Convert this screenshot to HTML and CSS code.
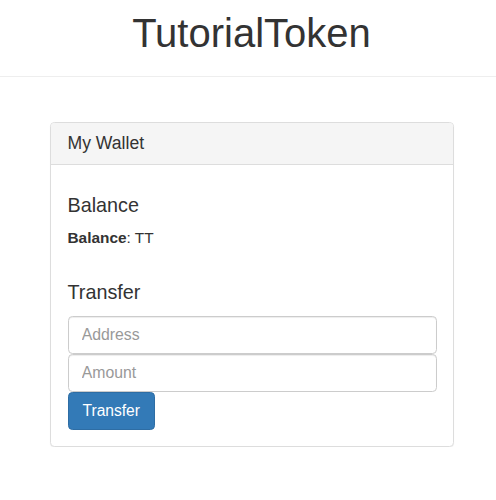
FILE: index.html
```html
<!DOCTYPE html>
<html lang="en">
<head>
  <meta charset="UTF-8" />
  <meta name="viewport" content="width=device-width, initial-scale=1.0"/>
  <title>TutorialToken</title>
  <link rel="stylesheet" href="styles.css">
</head>
<body>
  <header class="page-header">
    <h1>TutorialToken</h1>
  </header>

  <main class="container">
    <div class="panel">
      <div class="panel-heading">
        <h3 class="panel-title">My Wallet</h3>
      </div>
      <div class="panel-body">
        <h4 class="section-title balance-title">Balance</h4>
        <p class="balance"><strong>Balance</strong>: <span id="TTBalance"></span> TT</p>

        <h4 class="section-title transfer-title">Transfer</h4>
        <input type="text" class="form-control" id="TTTransferAddress" placeholder="Address">
        <input type="text" class="form-control" id="TTTransferAmount" placeholder="Amount">
        <button class="btn btn-primary" id="transferButton" type="button">Transfer</button>
      </div>
    </div>
  </main>
</body>
</html>
```

FILE: styles.css
```css
* {
  margin: 0;
  padding: 0;
  box-sizing: border-box;
}

body {
  font-family: "Liberation Sans", Arial, sans-serif;
  font-size: 15.4px;
  line-height: 22px;
  color: #333;
  background: #fff;
}

.page-header {
  padding: 11px 0 21px 7px;
  border-bottom: 1px solid #eee;
  text-align: center;
}

.page-header h1 {
  font-size: 40px;
  font-weight: 500;
  line-height: 44px;
}

.container {
  padding: 45px 42px 0 50px;
}

.panel {
  background: #fff;
  border: 1px solid #ddd;
  border-radius: 4.4px;
  box-shadow: 0 1px 1px rgba(0, 0, 0, 0.05);
}

.panel-heading {
  padding: 11px 16.5px;
  background: #f5f5f5;
  border-bottom: 1px solid #ddd;
  border-radius: 3.4px 3.4px 0 0;
}

.panel-title {
  font-size: 17.6px;
  font-weight: 500;
  line-height: 1.1;
}

.panel-body {
  padding: 16.5px;
}

.section-title {
  font-size: 19.8px;
  font-weight: 500;
  line-height: 1.1;
}

.balance-title {
  margin: 12.7px 0 11px;
}

.balance {
  margin-bottom: 11px;
}

.transfer-title {
  margin: 33px 0 11.5px;
}

.form-control {
  display: block;
  width: 100%;
  height: 38px;
  padding: 6.6px 13.2px;
  font-family: inherit;
  font-size: 15.8px;
  color: #555;
  background: #fff;
  border: 1px solid #ccc;
  border-radius: 4.4px;
  box-shadow: inset 0 1px 1px rgba(0, 0, 0, 0.075);
  outline: none;
}

.form-control::placeholder {
  color: #999;
}

.btn {
  display: inline-block;
  vertical-align: top;
  padding: 7px 14px;
  font-family: inherit;
  font-size: 15.6px;
  line-height: 22px;
  border: 1px solid transparent;
  border-radius: 4.4px;
  cursor: pointer;
}

.btn-primary {
  color: #fff;
  background: #337ab7;
  border-color: #2e6da4;
}
```
